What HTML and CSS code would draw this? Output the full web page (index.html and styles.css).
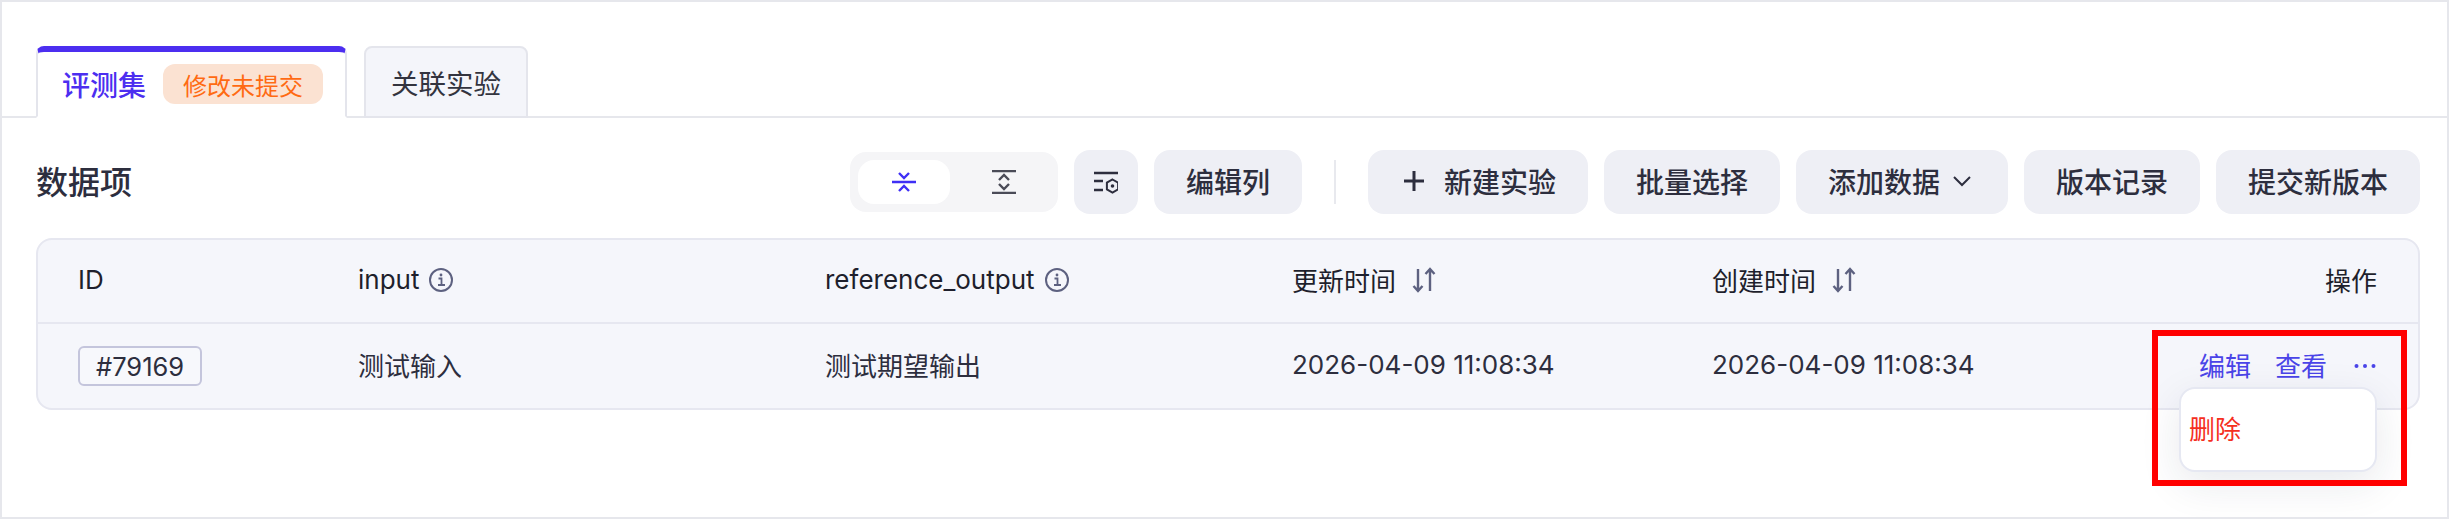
FILE: index.html
```html
<!DOCTYPE html>
<html lang="zh-CN">
<head>
    <meta charset="UTF-8">
    <title>评测集</title>
    <link rel="stylesheet" href="styles.css">
</head>
<body>
    <div class="page">
        <div class="tabs">
            <div class="tab active">
                <span>评测集</span>
                <span class="badge">修改未提交</span>
            </div>
            <div class="tab">关联实验</div>
        </div>

        <section class="panel">
            <div class="toolbar">
                <h2>数据项</h2>
                <div class="actions">
                    <div class="segment">
                        <div class="segment-item on">
                            <svg width="24" height="24" viewBox="0 0 24 24" fill="none" stroke="currentColor" stroke-width="2.4">
                                <path d="M0 12H24M7 3l5 5 5-5M7 21l5-5 5 5"/>
                            </svg>
                        </div>
                        <div class="segment-item">
                            <svg width="24" height="24" viewBox="0 0 24 24" fill="none" stroke="currentColor" stroke-width="2.4">
                                <path d="M0 1H24M0 23H24M7 10l5-5 5 5M7 14l5 5 5-5"/>
                            </svg>
                        </div>
                    </div>
                    <button class="btn icon-btn">
                        <svg width="24" height="24" viewBox="0 0 24 24" fill="none" stroke="currentColor" stroke-width="2.4">
                            <path d="M0 3H24M0 11H9M0 20H9"/>
                            <path d="M18.5 9.5l5.6 3.2v6.6l-5.6 3.2-5.6-3.2v-6.6z" stroke-width="2"/>
                            <circle cx="18.5" cy="16" r="1.8" fill="currentColor" stroke="none"/>
                        </svg>
                    </button>
                    <button class="btn">编辑列</button>
                    <div class="divider"></div>
                    <button class="btn">
                        <svg class="plus" width="28" height="28" viewBox="0 0 28 28" fill="none" stroke="currentColor" stroke-width="3">
                            <path d="M14 4V24M4 14H24"/>
                        </svg>
                        新建实验
                    </button>
                    <button class="btn">批量选择</button>
                    <button class="btn add">
                        添加数据
                        <svg width="28" height="28" viewBox="0 0 28 28" fill="none" stroke="currentColor" stroke-width="2">
                            <path d="M6 10l8 8 8-8"/>
                        </svg>
                    </button>
                    <button class="btn">版本记录</button>
                    <button class="btn">提交新版本</button>
                </div>
            </div>

            <div class="table">
                <div class="row head">
                    <div class="cell">ID</div>
                    <div class="cell">input
                        <svg class="info" width="24" height="24" viewBox="0 0 24 24" fill="none" stroke="currentColor" stroke-width="2">
                            <circle cx="12" cy="12" r="11"/>
                            <path d="M9.5 10.5H12.5V17M9 17H16" stroke-width="1.8"/>
                            <circle cx="12" cy="7" r="1.4" fill="currentColor" stroke="none"/>
                        </svg>
                    </div>
                    <div class="cell">reference_output
                        <svg class="info" width="24" height="24" viewBox="0 0 24 24" fill="none" stroke="currentColor" stroke-width="2">
                            <circle cx="12" cy="12" r="11"/>
                            <path d="M9.5 10.5H12.5V17M9 17H16" stroke-width="1.8"/>
                            <circle cx="12" cy="7" r="1.4" fill="currentColor" stroke="none"/>
                        </svg>
                    </div>
                    <div class="cell">更新时间
                        <svg class="sort" width="28" height="28" viewBox="0 0 28 28" fill="none" stroke="currentColor" stroke-width="2.4">
                            <path d="M6 3V25M1.5 20l4.5 5 4.5-5M18 25V3M13.5 8l4.5-5 4.5 5"/>
                        </svg>
                    </div>
                    <div class="cell">创建时间
                        <svg class="sort" width="28" height="28" viewBox="0 0 28 28" fill="none" stroke="currentColor" stroke-width="2.4">
                            <path d="M6 3V25M1.5 20l4.5 5 4.5-5M18 25V3M13.5 8l4.5-5 4.5 5"/>
                        </svg>
                    </div>
                    <div class="cell right">操作</div>
                </div>
                <div class="row">
                    <div class="cell id-cell"><span class="chip">#79169</span></div>
                    <div class="cell">测试输入</div>
                    <div class="cell">测试期望输出</div>
                    <div class="cell">2026-04-09 11:08:34</div>
                    <div class="cell">2026-04-09 11:08:34</div>
                    <div class="cell right ops">
                        <a>编辑</a>
                        <a>查看</a>
                        <a class="more">
                            <svg width="22" height="6" viewBox="0 0 22 6" fill="currentColor">
                                <circle cx="2.5" cy="3" r="2"/>
                                <circle cx="11" cy="3" r="2"/>
                                <circle cx="19.5" cy="3" r="2"/>
                            </svg>
                        </a>
                        <div class="menu"><span>删除</span></div>
                    </div>
                </div>
            </div>
        </section>

        <div class="highlight"></div>
    </div>
</body>
</html>
```

FILE: styles.css
```css
* {
    box-sizing: border-box;
}

body {
    margin: 0;
    background: #fff;
    font-family: Inter, "Noto Sans CJK SC", sans-serif;
    color: #2d2e3e;
}

.page {
    position: relative;
    width: 2449px;
    height: 519px;
    border: 2px solid #e6e7ec;
    overflow: hidden;
}

.tabs {
    display: flex;
    align-items: flex-end;
    gap: 17px;
    height: 116px;
    padding: 44px 0 0 34px;
    border-bottom: 2px solid #e6e7ec;
}

.tab {
    display: flex;
    align-items: center;
    height: 72px;
    margin-bottom: -2px;
    padding: 0 25px;
    font-size: 27.5px;
    color: #33343f;
    background: #f4f5fa;
    border: 2px solid #e4e5ec;
    border-radius: 8px 8px 0 0;
}

.tab.active {
    gap: 17px;
    width: 311px;
    padding: 0 0 0 24px;
    font-size: 28px;
    color: #4c2ef0;
    font-weight: 500;
    background: #fff;
    border-top: 6px solid #4c2ef0;
    border-bottom-color: #fff;
}

.badge {
    display: flex;
    align-items: center;
    height: 40px;
    padding: 0 20px;
    font-size: 24px;
    font-weight: 400;
    color: #ff6a13;
    background: #fbe2d2;
    border-radius: 12px;
}

.panel {
    padding: 32px 0 0 34px;
}

.toolbar {
    display: flex;
    align-items: center;
    justify-content: space-between;
    width: 2384px;
    height: 64px;
}

.toolbar h2 {
    margin: 0;
    padding-bottom: 4px;
    font-size: 32px;
    font-weight: 500;
}

.actions {
    display: flex;
    align-items: center;
    gap: 16px;
}

.segment {
    display: flex;
    width: 208px;
    height: 60px;
    padding: 8px 0 8px 8px;
    background: #f5f5f7;
    border-radius: 16px;
}

.segment-item {
    display: flex;
    align-items: center;
    justify-content: center;
    width: 92px;
    color: #4a4b57;
    border-radius: 16px;
}

.segment-item + .segment-item {
    flex: 1;
}

.segment-item.on {
    color: #3f2ff5;
    background: #fff;
}

.btn {
    display: flex;
    align-items: center;
    height: 64px;
    padding: 0 32px 2px;
    border: none;
    border-radius: 16px;
    background: #eeeff5;
    color: #2d2e3e;
    font-family: inherit;
    font-size: 28px;
    font-weight: 500;
}

.icon-btn {
    justify-content: center;
    width: 64px;
    padding: 0;
}

.plus {
    margin-right: 16px;
}

.add svg {
    margin-left: 8px;
}

.divider {
    width: 2px;
    height: 44px;
    margin: 0 16px;
    background: #e8e9ee;
}

.table {
    width: 2384px;
    margin-top: 24px;
    background: #f5f6fb;
    border: 2px solid #e6e7f0;
    border-radius: 16px;
}

.row {
    display: grid;
    grid-template-columns: 320px 467px 467px 420px 420px 1fr;
    align-items: center;
    height: 84px;
    font-size: 26px;
}

.row.head {
    border-bottom: 2px solid #e6e7f0;
    color: #1e1f2c;
}

.cell {
    display: flex;
    align-items: center;
    gap: 10px;
    padding-bottom: 3px;
}

.cell:first-child {
    padding-left: 40px;
}

.cell.id-cell {
    padding-bottom: 0;
}

.cell.right {
    justify-content: flex-end;
    padding-right: 41px;
}

.info {
    color: #5d6180;
}

.sort {
    margin-left: 6px;
    color: #5d6180;
}

.chip {
    display: inline-flex;
    align-items: center;
    height: 40px;
    padding: 0 16px;
    font-size: 25.5px;
    background: #f7f8fc;
    border: 2px solid #c4c5dc;
    border-radius: 6px;
}

.ops {
    position: relative;
    gap: 24px;
    color: #4a44e8;
}

.cell.ops {
    padding-right: 42px;
}

.more {
    display: flex;
    margin: 2px 0 0 3px;
}

.menu {
    position: absolute;
    top: 41px;
    right: 41px;
    display: flex;
    align-items: center;
    width: 198px;
    height: 85px;
    padding: 0 0 5px 8px;
    background: #fff;
    border: 2px solid #e6e8f2;
    border-radius: 16px;
    box-shadow: 0 12px 40px rgba(30, 35, 70, 0.1);
    color: #f5301f;
}

.highlight {
    position: absolute;
    left: 2150px;
    top: 328px;
    width: 255px;
    height: 156px;
    border: 6px solid #ff0000;
}
```
